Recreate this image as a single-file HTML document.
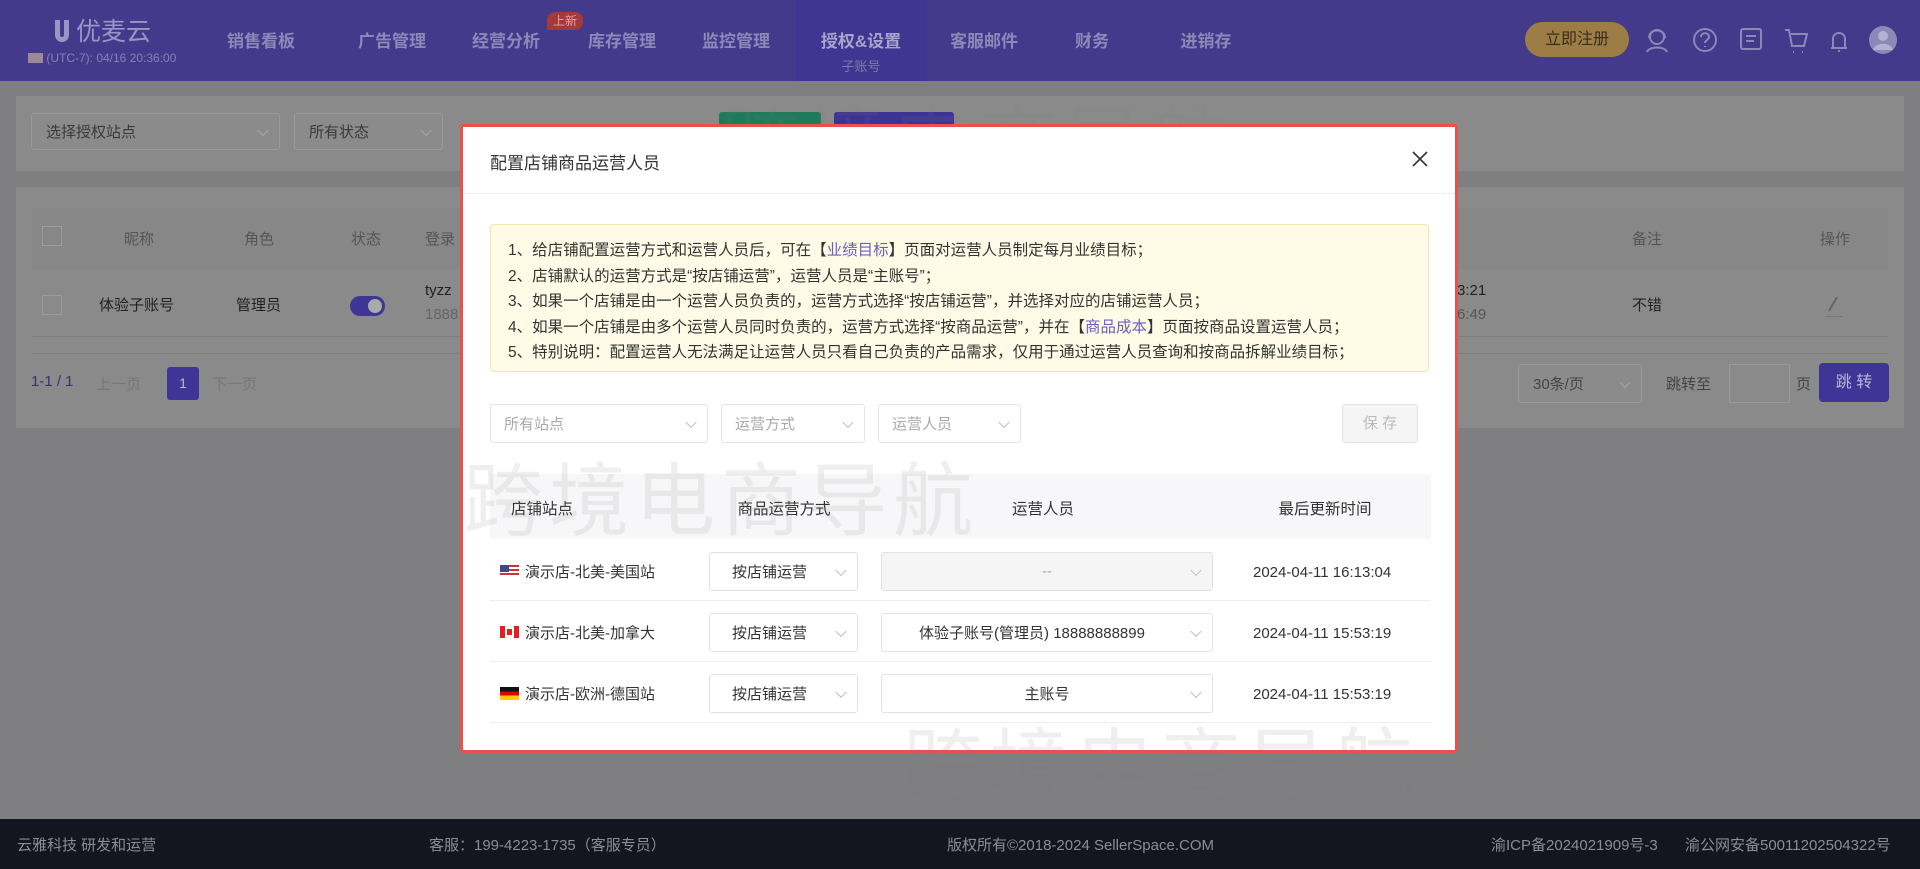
<!DOCTYPE html>
<html><head><meta charset="utf-8"><style>
*{margin:0;padding:0;box-sizing:border-box}
body{width:1920px;height:869px;overflow:hidden;background:#7f7f81;font-family:"Liberation Sans","Noto Sans CJK SC",sans-serif;position:relative;color:#333}
.a{position:absolute}
.hdr{left:0;top:0;width:1920px;height:81px;background:#433a8b}
.nav{top:27px;font-size:17px;font-weight:bold;color:#8d88b8;transform:translateX(-50%);white-space:nowrap}
.card{background:#8a8a8b}
.sel{border:1px solid #9a9a9b;background:#8b8b8c;border-radius:3px;font-size:15px;color:#3a3a3a;padding-left:14px;display:flex;align-items:center}
.chev{position:absolute;right:12px;top:50%;width:8px;height:8px;border-right:1px solid #aaa;border-bottom:1px solid #aaa;transform:translateY(-70%) rotate(45deg)}
.modal{left:460px;top:124px;width:998px;height:629px;background:#fff;border:3px solid #e8524c;border-radius:3px}
.m{position:absolute}
.note{left:27px;top:97px;width:939px;height:148px;background:#fffbe6;border:1px solid #f2e6a8;border-radius:4px;padding:13px 0 0 17px;font-size:15.5px;line-height:25.6px;color:#333}
.note b{font-weight:normal;color:#6a5fc1}
.ms{border:1px solid #e4e4e4;border-radius:3px;background:#fff;font-size:15px;color:#aaa;display:flex;align-items:center;padding-left:13px}
.ms .chev{border-color:#bbb}
.th{font-size:15.5px;color:#333;transform:translateX(-50%);white-space:nowrap}
.td{font-size:15px;color:#333;white-space:nowrap}
.rs{border:1px solid #e2e2e2;border-radius:3px;background:#fff;font-size:15px;color:#333;display:flex;align-items:center;justify-content:center}
.rs .chev{border-color:#bbb}
.ft{left:0;top:819px;width:1920px;height:50px;background:#14151f;color:#8b8c94;font-size:15px}
.ft span{position:absolute;top:15px;white-space:nowrap}
.wm{font-size:80px;color:rgba(120,120,120,.12);white-space:nowrap;letter-spacing:6px}
</style></head><body>
<div class="a hdr"></div>
<div class="a" style="left:55px;top:12px;color:#9a96c4;font-size:25px">
<span style="display:inline-block;width:14px;height:22px;border:5px solid #9a96c4;border-top:none;border-radius:0 0 8px 8px;vertical-align:-2px"></span> 优麦云</div>
<div class="a" style="left:28px;top:51px;font-size:12px;color:#8580b5"><span style="display:inline-block;width:15px;height:10px;background:#9b8a96;vertical-align:-1px"></span> (UTC-7): 04/16 20:36:00</div>
<div class="a" style="left:796px;top:0;width:131px;height:81px;background:#3e3690"></div>
<div class="a nav" style="left:261px">销售看板</div>
<div class="a nav" style="left:392px">广告管理</div>
<div class="a nav" style="left:506px">经营分析</div>
<div class="a" style="left:547px;top:12px;width:36px;height:18px;background:#a43a3a;border-radius:8px 8px 8px 0;font-size:12px;color:#d8a8a8;text-align:center;line-height:18px">上新</div>
<div class="a nav" style="left:622px">库存管理</div>
<div class="a nav" style="left:736px">监控管理</div>
<div class="a nav" style="left:861px;color:#a8a4cc">授权&amp;设置</div>
<div class="a" style="left:861px;top:56px;transform:translateX(-50%);font-size:13px;color:#7d78ad">子账号</div>
<div class="a nav" style="left:984px">客服邮件</div>
<div class="a nav" style="left:1092px">财务</div>
<div class="a nav" style="left:1206px">进销存</div>
<div class="a" style="left:1525px;top:22px;width:104px;height:35px;background:#9c7d45;border-radius:18px;color:#3a2d1a;font-size:16px;text-align:center;line-height:35px">立即注册</div>
<svg class="a" style="left:1643px;top:24px" width="270" height="32" fill="none" stroke="#8d88b8" stroke-width="2">
<circle cx="14" cy="13" r="7"/><path d="M4 28c2-6 18-6 20 0M6 14c0-10 16-10 16 0"/>
<circle cx="62" cy="16" r="11"/><path d="M58 13c0-5 8-5 8 0c0 3-4 3-4 6M62 22v1"/>
<rect x="98" y="5" width="20" height="20" rx="2"/><path d="M103 12h10M103 17h8"/>
<path d="M142 6h4l3 16h12l3-12h-16M150 28h1M159 28h1"/>
<path d="M188 24h16M190 24v-9c0-8 12-8 12 0v9M195 27h2"/>
<circle cx="240" cy="16" r="14" fill="#8d88b8" stroke="none"/><circle cx="240" cy="12" r="5" fill="#b5b1d2" stroke="none"/><path d="M231 26c3-7 15-7 18 0" stroke="#b5b1d2" fill="#b5b1d2"/>
</svg>
<div class="a card" style="left:16px;top:96px;width:1888px;height:75px"></div>
<div class="a sel" style="left:31px;top:113px;width:249px;height:37px">选择授权站点<i class="chev"></i></div>
<div class="a sel" style="left:294px;top:113px;width:149px;height:37px">所有状态<i class="chev"></i></div>
<div class="a" style="left:719px;top:112px;width:102px;height:14px;background:#1f7a5a;border-radius:3px"></div>
<div class="a" style="left:834px;top:112px;width:120px;height:14px;background:#3c3495;border-radius:3px"></div>
<div class="a card" style="left:16px;top:187px;width:1888px;height:241px"></div>
<div class="a" style="left:32px;top:208px;width:1856px;height:61px;background:#878788"></div>
<div class="a" style="left:32px;top:336px;width:1856px;height:1px;background:#7e7e7e"></div>
<div class="a" style="left:32px;top:353px;width:1856px;height:1px;background:#7e7e7e"></div>
<div class="a" style="left:42px;top:226px;width:20px;height:20px;border:1px solid #9c9c9c"></div>
<div class="a" style="left:42px;top:295px;width:20px;height:20px;border:1px solid #9c9c9c"></div>
<div class="a td" style="left:124px;top:228px;color:#555">昵称</div>
<div class="a td" style="left:244px;top:228px;color:#555">角色</div>
<div class="a td" style="left:351px;top:228px;color:#555">状态</div>
<div class="a td" style="left:425px;top:228px;color:#555">登录</div>
<div class="a td" style="left:99px;top:294px;color:#222">体验子账号</div>
<div class="a td" style="left:236px;top:294px;color:#222">管理员</div>
<div class="a" style="left:350px;top:296px;width:35px;height:20px;background:#3f3597;border-radius:10px"><i style="position:absolute;right:3px;top:3px;width:14px;height:14px;border-radius:7px;background:#aaa"></i></div>
<div class="a td" style="left:425px;top:282px;color:#222">tyzz</div>
<div class="a td" style="left:425px;top:306px;color:#666">1888</div>
<div class="a td" style="left:1632px;top:228px;color:#555">备注</div>
<div class="a td" style="left:1820px;top:228px;color:#555">操作</div>
<div class="a td" style="left:1457px;top:282px;color:#222">3:21</div>
<div class="a td" style="left:1457px;top:306px;color:#555">6:49</div>
<div class="a td" style="left:1632px;top:294px;color:#222">不错</div>
<div class="a" style="left:1832px;top:296px;width:2px;height:16px;background:#666;transform:rotate(30deg)"></div>
<div class="a" style="left:1825px;top:316px;width:18px;height:1px;background:#777"></div>
<div class="a td" style="left:31px;top:373px;color:#38336e">1-1 / 1</div>
<div class="a td" style="left:96px;top:373px;color:#777">上一页</div>
<div class="a" style="left:167px;top:367px;width:32px;height:33px;background:#3f3597;border-radius:3px;color:#bbb;font-size:14px;text-align:center;line-height:33px">1</div>
<div class="a td" style="left:212px;top:373px;color:#777">下一页</div>
<div class="a sel" style="left:1518px;top:364px;width:124px;height:39px;color:#444">30条/页<i class="chev"></i></div>
<div class="a td" style="left:1666px;top:373px;color:#444">跳转至</div>
<div class="a" style="left:1729px;top:364px;width:61px;height:39px;border:1px solid #9a9a9b"></div>
<div class="a td" style="left:1796px;top:373px;color:#444">页</div>
<div class="a" style="left:1819px;top:363px;width:70px;height:39px;background:#3f3597;border-radius:4px;color:#b8b5d8;font-size:16px;text-align:center;line-height:39px">跳 转</div>
<div class="a wm" style="left:720px;top:80px">跨境电商导航</div>

<div class="a modal">
<div class="m" style="left:27px;top:22px;font-size:17px;color:#333">配置店铺商品运营人员</div>
<svg class="m" style="left:949px;top:24px" width="16" height="16" stroke="#333" stroke-width="1.6"><path d="M1 1L15 15M15 1L1 15"/></svg>
<div class="m" style="left:0;top:66px;width:992px;height:1px;background:#eee"></div>
<div class="m note">1、给店铺配置运营方式和运营人员后，可在【<b>业绩目标</b>】页面对运营人员制定每月业绩目标；<br>2、店铺默认的运营方式是“按店铺运营”，运营人员是“主账号”；<br>3、如果一个店铺是由一个运营人员负责的，运营方式选择“按店铺运营”，并选择对应的店铺运营人员；<br>4、如果一个店铺是由多个运营人员同时负责的，运营方式选择“按商品运营”，并在【<b>商品成本</b>】页面按商品设置运营人员；<br>5、特别说明：配置运营人无法满足让运营人员只看自己负责的产品需求，仅用于通过运营人员查询和按商品拆解业绩目标；</div>
<div class="m ms" style="left:27px;top:277px;width:218px;height:39px">所有站点<i class="chev"></i></div>
<div class="m ms" style="left:258px;top:277px;width:144px;height:39px">运营方式<i class="chev"></i></div>
<div class="m ms" style="left:415px;top:277px;width:143px;height:39px">运营人员<i class="chev"></i></div>
<div class="m" style="left:879px;top:277px;width:76px;height:39px;background:#f5f5f5;border:1px solid #e2e2e2;border-radius:3px;color:#bbb;font-size:15px;text-align:center;line-height:37px">保 存</div>
<div class="m" style="left:27px;top:347px;width:941px;height:65px;background:#f7f7f9"></div>
<div class="m th" style="left:79px;top:370px">店铺站点</div>
<div class="m th" style="left:321px;top:370px">商品运营方式</div>
<div class="m th" style="left:580px;top:370px">运营人员</div>
<div class="m th" style="left:862px;top:370px">最后更新时间</div>
<div class="m" style="left:27px;top:473px;width:941px;height:1px;background:#eee"></div>
<div class="m" style="left:27px;top:534px;width:941px;height:1px;background:#eee"></div>
<div class="m" style="left:27px;top:595px;width:941px;height:1px;background:#eee"></div>

<div class="m" style="left:37px;top:438px;width:19px;height:12px;background:repeating-linear-gradient(#c33 0 2px,#fff 2px 4px)"><i style="position:absolute;left:0;top:0;width:9px;height:7px;background:#3b4a8c"></i></div>
<div class="m td" style="left:62px;top:434px">演示店-北美-美国站</div>
<div class="m rs" style="left:246px;top:425px;width:149px;height:39px;justify-content:flex-start;padding-left:22px">按店铺运营<i class="chev"></i></div>
<div class="m rs" style="left:418px;top:425px;width:332px;height:39px;background:#f5f5f5;color:#aaa">--<i class="chev"></i></div>
<div class="m td" style="left:790px;top:437px">2024-04-11 16:13:04</div>

<div class="m" style="left:37px;top:499px;width:19px;height:12px;background:linear-gradient(90deg,#d22 0 5px,#fff 5px 14px,#d22 14px)"><i style="position:absolute;left:7px;top:3px;width:5px;height:6px;background:#d22"></i></div>
<div class="m td" style="left:62px;top:495px">演示店-北美-加拿大</div>
<div class="m rs" style="left:246px;top:486px;width:149px;height:39px;justify-content:flex-start;padding-left:22px">按店铺运营<i class="chev"></i></div>
<div class="m rs" style="left:418px;top:486px;width:332px;height:39px;padding-right:30px">体验子账号(管理员) 18888888899<i class="chev"></i></div>
<div class="m td" style="left:790px;top:498px">2024-04-11 15:53:19</div>

<div class="m" style="left:37px;top:560px;width:19px;height:13px;background:linear-gradient(#111 0 33%,#d00 33% 66%,#fc0 66%)"></div>
<div class="m td" style="left:62px;top:556px">演示店-欧洲-德国站</div>
<div class="m rs" style="left:246px;top:547px;width:149px;height:39px;justify-content:flex-start;padding-left:22px">按店铺运营<i class="chev"></i></div>
<div class="m rs" style="left:418px;top:547px;width:332px;height:39px">主账号<i class="chev"></i></div>
<div class="m td" style="left:790px;top:559px">2024-04-11 15:53:19</div>
<div class="m wm" style="left:0;top:310px">跨境电商导航</div>
<div class="m wm" style="left:440px;top:575px">跨境电商导航</div>
</div>

<div class="a ft">
<span style="left:17px">云雅科技 研发和运营</span>
<span style="left:429px">客服：199-4223-1735（客服专员）</span>
<span style="left:947px">版权所有©2018-2024 SellerSpace.COM</span>
<span style="left:1491px">渝ICP备2024021909号-3</span>
<span style="left:1685px">渝公网安备50011202504322号</span>
</div>
</body></html>
